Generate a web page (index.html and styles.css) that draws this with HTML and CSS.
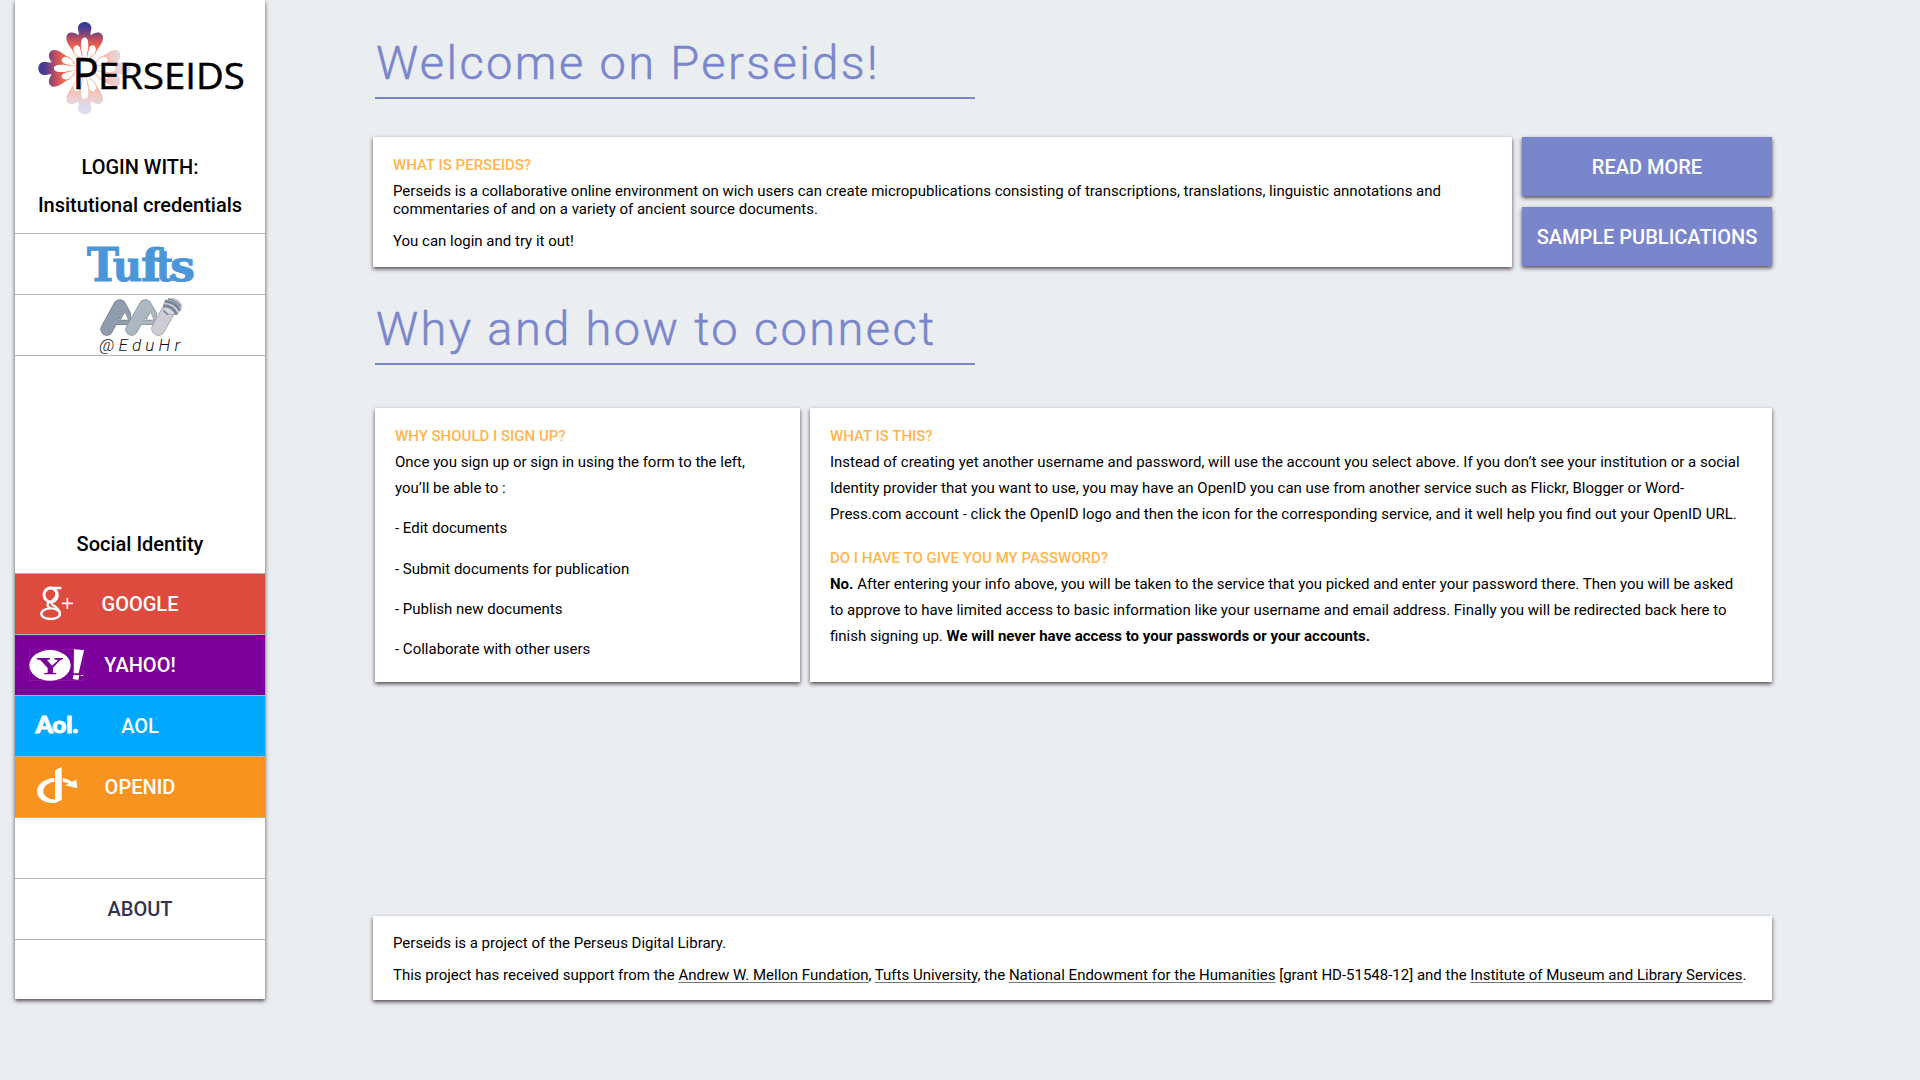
FILE: index.html
```html
<!DOCTYPE html>
<html lang="en">
<head>
<meta charset="utf-8">
<title>Perseids</title>
<link rel="stylesheet" href="styles.css">
</head>
<body>
<div class="page">
  <nav class="sidebar">
    <div class="brand">
      <svg class="brand-logo" viewBox="0 0 750 400" aria-label="Perseids">
        <defs>
          <linearGradient id="strong" x1="0" y1="65" x2="0" y2="190" gradientUnits="userSpaceOnUse">
            <stop offset="0" stop-color="#2f3f9e"/><stop offset=".2" stop-color="#5a3d8a"/><stop offset=".42" stop-color="#c04f5f"/><stop offset=".6" stop-color="#f0654a"/><stop offset="1" stop-color="#fbb79a"/>
          </linearGradient>
          <linearGradient id="soft" x1="0" y1="65" x2="0" y2="190" gradientUnits="userSpaceOnUse">
            <stop offset="0" stop-color="#dfe0f2"/><stop offset=".2" stop-color="#dcdaee"/><stop offset=".5" stop-color="#f4c8be"/><stop offset="1" stop-color="#f9a27c"/>
          </linearGradient>
          <g id="petal">
            <path d="M245 180L222 160C216 142 200 132 200 113C200 97 220 92 236 106C240 98 235 95 235 85C235 60 275 60 275 85C275 95 270 98 274 106C290 92 310 97 310 113C310 132 294 142 288 160L265 180Z"/>
            <path fill="#fff" d="M250 196L248 160C243 145 244 135 245 124C247 109 263 109 265 124C266 135 267 145 262 160L260 196ZM246 190L241 172C226 164 219 155 222 143C228 131 240 136 242 148L247 170ZM264 190L269 172C284 164 291 155 288 143C282 131 270 136 268 148L263 170Z"/>
          </g>
        </defs>
        <g transform="translate(-46 0)">
          <use href="#petal" fill="url(#soft)" transform="rotate(90 255 205)"/>
          <use href="#petal" fill="url(#soft)" transform="rotate(180 255 205)"/>
          <use href="#petal" fill="url(#strong)" transform="rotate(-90 255 205)"/>
          <use href="#petal" fill="url(#strong)"/>
          <text class="brand-text" x="218" y="268"><tspan class="brand-initial" textLength="80" lengthAdjust="spacingAndGlyphs">P</tspan><tspan x="295" textLength="440" lengthAdjust="spacingAndGlyphs">ERSEIDS</tspan></text>
        </g>
      </svg>
      <h2 class="login-title">LOGIN WITH:</h2>
      <h3 class="login-group">Insitutional credentials</h3>
    </div>
    <a class="row">
      <svg class="full" viewBox="45 42 750 180" aria-label="Tufts"><text class="tufts" y="183"><tspan font-size="138" x="261" textLength="96" lengthAdjust="spacingAndGlyphs">T</tspan><tspan x="338" textLength="88" lengthAdjust="spacingAndGlyphs">u</tspan><tspan font-size="136" x="423" textLength="60" lengthAdjust="spacingAndGlyphs">f</tspan><tspan x="468" textLength="52" lengthAdjust="spacingAndGlyphs">t</tspan><tspan x="511" textLength="74" lengthAdjust="spacingAndGlyphs">s</tspan></text></svg>
    </a>
    <a class="row">
      <svg class="full" viewBox="45 225 750 180" aria-label="AAI @EduHr">
        <g fill="none" stroke-linecap="round" stroke-linejoin="round">
          <path stroke="#6f7b8a" stroke-width="38" d="M320 328L359 257L374 284"/>
          <path stroke="#6f7b8a" stroke-width="14" d="M342 308H378L388 295"/>
          <path stroke="#8f9dae" stroke-width="34" d="M320 328L359 257L374 284"/>
          <path stroke="#8f9dae" stroke-width="10" d="M342 308H378L388 295"/>
          <path stroke="#84919a" stroke-width="38" d="M395 328L436 257L452 284"/>
          <path stroke="#84919a" stroke-width="14" d="M420 308H456L464 295"/>
          <path stroke="#acb8c1" stroke-width="34" d="M395 328L436 257L452 284"/>
          <path stroke="#acb8c1" stroke-width="10" d="M420 308H456L464 295"/>
          <path fill="#fff" stroke="#8793a0" stroke-width="2" d="M375 276L385 300H362ZM452 276L462 300H439Z"/>
          <path stroke="#98989f" stroke-width="42" d="M475 326L505 272"/>
          <path stroke="#cfcdd3" stroke-width="38" d="M475 326L505 272"/>
        </g>
        <ellipse cx="517" cy="260" rx="27" ry="24" fill="#d5d7dc" stroke="#8b96a3" stroke-width="2"/>
        <g fill="none" stroke="#74869a" stroke-width="9"><path d="M490 257Q520 257 530 284M494 244Q526 246 539 271"/><path stroke-width="4" d="M504 237Q529 242 542 259M490 272L504 284"/></g>
        <text class="eduhr" x="298" y="394" textLength="242" lengthAdjust="spacing">@EduHr</text>
      </svg>
    </a>
    <div class="social-head"><h3 class="login-group">Social Identity</h3></div>
    <a class="row google">
      <svg class="icon" viewBox="45 162 240 180"><g fill="none" stroke="#fff"><ellipse cx="152" cy="225" rx="20" ry="21" stroke-width="9" transform="rotate(-15 152 225)"/><ellipse cx="152" cy="281" rx="28" ry="16" stroke-width="7"/><path stroke-width="7" d="M150 204H184M164 208Q176 222 163 237Q150 247 157 254Q174 264 179 276M146 246Q137 257 150 264"/><path stroke-width="5" d="M186 250H219M202 234V267"/></g></svg>
      GOOGLE
    </a>
    <a class="row yahoo">
      <svg class="icon" viewBox="45 345 240 180"><rect x="88" y="388" width="163" height="94" fill="none" stroke="#8d21a3" stroke-width="2"/><ellipse cx="150" cy="436" rx="62" ry="46" fill="#fff"/><path fill="#7b0099" d="M110 414H150V418L141 420L156 437L174 421L163 418V414H189V418L181 420L159 443V458L169 460V463H132V460L143 458V444L121 420L110 418Z"/><path fill="#fff" d="M222 388L252 391L236 460H221ZM221 464L238 466L235 480L218 477ZM242 465H249V468H242Z"/></svg>
      YAHOO!
    </a>
    <a class="row aol">
      <svg class="icon" viewBox="45 528 240 180"><text class="aol-text" x="107" y="640" textLength="128" lengthAdjust="spacingAndGlyphs">Aol.</text></svg>
      AOL
    </a>
    <a class="row openid">
      <svg class="icon" viewBox="45 711 240 180"><path fill="#fff" d="M165 751L185 741V840L165 849C95 852 92 780 163 774V785C119 792 118 835 165 839ZM188 774Q205 777 216 785L229 779L232 805L195 796L206 791Q198 786 188 785Z"/></svg>
      OPENID
    </a>
    <div class="row"></div>
    <a class="row about">ABOUT</a>
    <div class="row last"></div>
  </nav>

  <main class="main">
    <h1 class="title">Welcome on Perseids!</h1>
    <div class="intro">
      <section class="card intro-card">
        <h4>WHAT IS PERSEIDS?</h4>
        <p>Perseids is a collaborative online environment on wich users can create micropublications consisting of transcriptions, translations, linguistic annotations and<br>commentaries of and on a variety of ancient source documents.</p>
        <p>You can login and try it out!</p>
      </section>
      <div class="buttons">
        <a class="button">READ MORE</a>
        <a class="button">SAMPLE PUBLICATIONS</a>
      </div>
    </div>
    <h1 class="title second">Why and how to connect</h1>
    <div class="columns">
      <section class="card why">
        <h4>WHY SHOULD I SIGN UP?</h4>
        <p>Once you sign up or sign in using the form to the left,<br>you’ll be able to :</p>
        <p>- Edit documents</p>
        <p>- Submit documents for publication</p>
        <p>- Publish new documents</p>
        <p>- Collaborate with other users</p>
      </section>
      <section class="card what">
        <h4>WHAT IS THIS?</h4>
        <p>Instead of creating yet another username and password, will use the account you select above. If you don’t see your institution or a social<br>Identity provider that you want to use, you may have an OpenID you can use from another service such as Flickr, Blogger or Word-<br>Press.com account - click the OpenID logo and then the icon for the corresponding service, and it well help you find out your OpenID URL.</p>
        <h4>DO I HAVE TO GIVE YOU MY PASSWORD?</h4>
        <p><b>No.</b> After entering your info above, you will be taken to the service that you picked and enter your password there. Then you will be asked<br>to approve to have limited access to basic information like your username and email address. Finally you will be redirected back here to<br>finish signing up. <b>We will never have access to your passwords or your accounts.</b></p>
      </section>
    </div>
    <footer class="card footer">
      <p>Perseids is a project of the Perseus Digital Library.</p>
      <p>This project has received support from the <a>Andrew W. Mellon Fundation</a>, <a>Tufts University</a>, the <a>National Endowment for the Humanities</a> [grant HD-51548-12] and the <a>Institute of Museum and Library Services</a>.</p>
    </footer>
  </main>
</div>
</body>
</html>
```
FILE: styles.css
```css
* { box-sizing: border-box; }

body {
  margin: 0;
  background: #eaeef1;
  color: #000;
  font: 15px/18px Roboto, sans-serif;
}

h1, h2, h3, h4, p { margin: 0; }

.page {
  display: flex;
  align-items: flex-start;
  gap: 108px;
  height: 1080px;
  padding-left: 15px;
  overflow: hidden;
}

.sidebar, .card, .button {
  box-shadow: 0 2px 4px rgba(45, 30, 40, .8);
}

/* Sidebar */
.sidebar {
  display: flex;
  flex-direction: column;
  flex: none;
  width: 250px;
  height: 999px;
  background: #fff;
}

.brand {
  height: 233px;
  text-align: center;
}

.brand-logo {
  display: block;
  width: 250px;
  height: 133.33px;
}

.brand-text {
  font-family: "Open Sans", sans-serif;
  font-size: 111px;
  fill: #000;
  stroke: #000;
  stroke-width: 1.5px;
}

.brand-initial { font-size: 134px; }

.login-title {
  margin-top: 20px;
  font: 500 20px/28px Roboto, sans-serif;
}

.login-group {
  font: 500 20px/28px Roboto, sans-serif;
  text-align: center;
}

.brand .login-group { margin-top: 10px; }

.row {
  display: flex;
  align-items: center;
  justify-content: center;
  position: relative;
  height: 61px;
  flex: none;
  border-top: 1px solid #b3b3b5;
  font-size: 20px;
  font-weight: 500;
  color: #fff;
}

.full { width: 250px; height: 60px; }

.tufts {
  font-family: "DejaVu Serif", serif;
  font-size: 128px;
  font-weight: bold;
  fill: #4b96d8;
  stroke: #4b96d8;
  stroke-width: 3px;
}

.eduhr {
  font-family: Roboto, sans-serif;
  font-size: 51px;
  font-style: italic;
  font-weight: 300;
  fill: #111;
}

.social-head {
  height: 218px;
  padding-top: 174px;
  border-top: 1px solid #b3b3b5;
}

/* Provider logos sit over the left end of the centred button */
.icon {
  position: absolute;
  left: 0;
  top: 0;
  width: 80px;
  height: 60px;
}

.google { background: #dd4b3e; }
.yahoo { background: #7b0099; }
.aol { background: #00a8ff; }
.openid { background: #f8931f; }

.aol-text {
  font-family: Lato, sans-serif;
  font-size: 66px;
  font-weight: 900;
  fill: #fff;
  stroke: #fff;
  stroke-width: 3px;
}

.about { color: #34344f; }
.last { height: 60px; }

/* Content */
.main { width: 1399px; }

.title {
  width: 600px;
  height: 99px;
  margin-left: 2px;
  padding: 35px 0 0 1px;
  border-bottom: 2px solid #7986cb;
  color: #7986cb;
  font: 300 47px/56px Roboto, sans-serif;
  letter-spacing: 2.4px;
  white-space: nowrap;
  -webkit-text-stroke: .5px #7986cb;
}

.title.second {
  height: 98px;
  padding-top: 34px;
}

.intro {
  display: flex;
  gap: 10px;
  margin: 38px 0 0;
}

.card {
  background: #fff;
  padding: 20px;
  white-space: nowrap;
}

.card h4 {
  color: #ffb54d;
  font-size: 15px;
  font-weight: 500;
}

.intro-card {
  width: 1139px;
  height: 130px;
  padding-top: 19px;
}

.intro-card h4 { margin-bottom: 8px; }
.intro-card p + p { margin-top: 14px; }

.buttons {
  display: flex;
  flex-direction: column;
  gap: 11px;
  width: 250px;
}

.button {
  display: grid;
  place-items: center;
  height: 59px;
  padding-top: 1px;
  background: #7986cb;
  color: #fff;
  font-size: 20px;
  font-weight: 500;
}

.columns {
  display: flex;
  gap: 10px;
  margin: 43px 0 0 2px;
  line-height: 26px;
}

.columns .card {
  height: 274px;
  padding-top: 15px;
}

.why { width: 425px; }
.what { width: 962px; }
.why p + p { margin-top: 14.3px; }
.what h4:nth-of-type(2) { margin-top: 18px; }

.footer {
  height: 84px;
  margin-top: 234px;
  padding-top: 18px;
}

.footer p { letter-spacing: -.005px; }
.footer p + p { margin-top: 14px; }

.footer a {
  text-decoration: underline 1px #77777a;
  text-decoration-skip-ink: none;
  text-underline-offset: 2px;
}
```
